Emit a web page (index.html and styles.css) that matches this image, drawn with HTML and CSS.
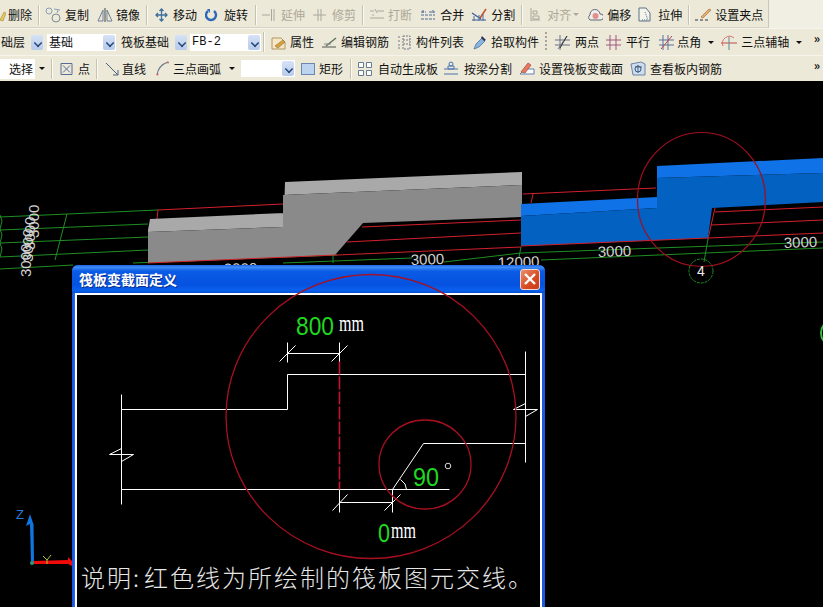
FILE: index.html
```html
<!DOCTYPE html>
<html lang="zh">
<head>
<meta charset="utf-8">
<title>筏板变截面定义</title>
<link rel="stylesheet" href="styles.css">
</head>
<body>
<div class="app">
  <div class="bar bar1">
   <div class="band">
    <div class="tool g2"><svg width="6" height="16" viewBox="0 0 6 16"><path d="M0 13 4 5l2 1-3 8z" fill="#e8c860" stroke="#a08830" stroke-width=".6"/></svg><span>删除</span></div>
    <i class="sep m6"></i>
    <div class="tool m6 g3"><svg width="17" height="16" viewBox="0 0 17 16" fill="none"><circle cx="4" cy="4" r="3" stroke="#8aa0b8"/><circle cx="11" cy="11" r="4" stroke="#7a8a98"/><path d="M9 2l6 1M13 3l-1 3" stroke="#8aa0b8"/></svg><span>复制</span></div>
    <div class="tool m8 g3"><svg width="16" height="16" viewBox="0 0 16 16" fill="none" stroke="#6c8096"><path d="M6 3 1 14h5zM10 3l5 11h-5z"/><path d="M8 1v14" stroke="#444"/></svg><span>镜像</span></div>
    <i class="sep m6"></i>
    <div class="tool m8 g5"><svg width="13" height="14" viewBox="0 0 13 14" fill="none" stroke="#3f6f9f" stroke-width="1.3"><path d="M6.500 1v12M1 7h11M4.500 3l2-2 2 2M4.500 11l2 2 2-2M3 5 1 7l2 2M10 5l2 2-2 2"/></svg><span>移动</span></div>
    <div class="tool m8 g6"><svg width="13" height="14" viewBox="0 0 13 14" fill="none"><path d="M3 3a5 5 0 1 0 6 0" stroke="#2f68b8" stroke-width="2.400"/><path d="M2 1h3v4z" fill="#2f68b8"/></svg><span>旋转</span></div>
    <i class="sep m7"></i>
    <div class="tool m6 g6 off"><svg width="13" height="14" viewBox="0 0 13 14" fill="none" stroke="#aaa69a"><path d="M0 7h8M9.500 1v12M12 1v12"/></svg><span>延伸</span></div>
    <div class="tool m8 g6 off"><svg width="13" height="14" viewBox="0 0 13 14" fill="none" stroke="#aaa69a"><path d="M0 7h13M5 1v12M8 1v12"/></svg><span>修剪</span></div>
    <i class="sep m6"></i>
    <div class="tool m6 g3 off"><svg width="16" height="14" viewBox="0 0 16 14" fill="none" stroke="#a8a89c"><path d="M1 3h4M8 3h7M1 10h14M6 1l2 4M3 7h2"/></svg><span>打断</span></div>
    <div class="tool m8 g4"><svg width="16" height="14" viewBox="0 0 16 14" fill="none" stroke="#4a6a98"><path d="M1 4h5M9 4h6M1 11h14M3 2v4M13 2v4M1 7h14" stroke-dasharray="3 1"/></svg><span>合并</span></div>
    <div class="tool m7 g4"><svg width="16" height="15" viewBox="0 0 16 15" fill="none"><path d="M1 13h14M1 6l9 6" stroke="#3a5a98" stroke-width="1.200"/><path d="M9 11 15 2" stroke="#c85030" stroke-width="1.500"/><path d="M3 9v5M8 8v6M12 7v7" stroke="#4a6aa8"/></svg><span>分割</span></div>
    <i class="sep m6"></i>
    <div class="tool m8 g6 off"><svg width="11" height="15" viewBox="0 0 11 15" fill="none" stroke="#aaa69a"><path d="M1 1v13M1 13h9M3 4h4v3H3zM3 9h6v3H3z"/></svg><span>对齐</span></div>
    <i class="drop m2 dim"></i>
    <div class="tool m9 g4"><svg width="15" height="14" viewBox="0 0 15 14"><path d="M2 12a3 3 0 0 1 0-5 5 5 0 0 1 10-1 3 3 0 0 1 1 6z" fill="#eee" stroke="#667"/><circle cx="7.500" cy="8" r="3" fill="#e09088"/></svg><span>偏移</span></div>
    <div class="tool m7 g6"><svg width="14" height="15" viewBox="0 0 14 15" fill="none" stroke="#5a7088"><path d="M1 1h7l4 5v8H1z" fill="#f4f4ea"/><path d="M7 5l3 8M4 13h6" stroke-dasharray="1 1"/></svg><span>拉伸</span></div>
    <i class="sep m6"></i>
    <div class="tool m6 g3"><svg width="17" height="15" viewBox="0 0 17 15" fill="none"><path d="M0 13h3M5 13h3M10 13h3" stroke="#333"/><path d="M6 10 14 2l2 1-8 8z" fill="#e8b070" stroke="#a07040" stroke-width=".7"/></svg><span>设置夹点</span></div>
   </div>
  </div>

  <div class="bar bar2">
    <span class="m1">础层</span>
    <i class="arrow m6"></i>
    <div class="combo m4 w69"><span>基础</span><i class="arrow"></i></div>
    <span class="m5">筏板基础</span>
    <i class="arrow m6"></i>
    <div class="combo m3 w71"><span class="mono">FB-2</span><i class="arrow"></i></div>
    <i class="sep m2"></i>
    <div class="tool m7 g3"><svg width="16" height="15" viewBox="0 0 16 15"><path d="M1 3h9l4 4v7H1z" fill="#f4e8c8" stroke="#b09860"/><path d="M4 11l8-6 2 2-7 6z" fill="#d8a040" stroke="#90702c" stroke-width=".6"/></svg><span>属性</span></div>
    <div class="tool m8 g3"><svg width="16" height="15" viewBox="0 0 16 15" fill="none"><path d="M0 12h14" stroke="#555"/><path d="M4 11 14 3" stroke="#607060" stroke-width="1.500"/><path d="M2 9h7" stroke="#888"/></svg><span>编辑钢筋</span></div>
    <div class="tool m8 g5"><svg width="14" height="15" viewBox="0 0 14 15" fill="none" stroke="#778"><path d="M6 1h7v13H6zM6 5h7M6 9h7M1 2h3M1 6h3M1 10h3M1 13h3" stroke-dasharray="2 1"/></svg><span>构件列表</span></div>
    <div class="tool m9 g4"><svg width="14" height="15" viewBox="0 0 14 15"><path d="M1 14l2-5 6-6 3 3-6 6z" fill="#8ab4e0" stroke="#406898" stroke-width=".7"/><path d="M9 1l4 4-2 1-3-3z" fill="#335"/></svg><span>拾取构件</span></div>
    <i class="grip m6"></i>
    <div class="tool m8 g5"><svg width="15" height="15" viewBox="0 0 15 15" fill="none" stroke="#6a7288"><path d="M0 5h15M0 10h15M5 0v15M3 14 12 1"/><path d="M12 1 5 13" stroke="#333"/></svg><span>两点</span></div>
    <div class="tool m7 g5"><svg width="15" height="15" viewBox="0 0 15 15" fill="none" stroke="#a05880"><path d="M0 5h15M0 10h15M4 0v15M10 0v15"/></svg><span>平行</span></div>
    <div class="tool m9 g2"><svg width="16" height="15" viewBox="0 0 16 15" fill="none" stroke="#5870a0"><path d="M0 5h15M0 10h15M4 0v15M9 0v15"/><path d="M2 14 13 1" stroke="#c04040"/></svg><span>点角</span></div>
    <i class="drop m7"></i>
    <div class="tool m7 g4"><svg width="16" height="15" viewBox="0 0 16 15" fill="none"><path d="M0 8h16" stroke="#c04848"/><path d="M8 2v13" stroke="#5a8a9a"/><path d="M2 11a7 7 0 0 1 11-8" stroke="#d87070"/></svg><span>三点辅轴</span></div>
    <i class="drop m7"></i>
    <span class="more">»</span>
  </div>

  <div class="bar bar3">
    <div class="field w35"><span>选择</span></div>
    <i class="drop m4"></i>
    <i class="sep m6"></i>
    <div class="tool m8 g5"><svg width="13" height="14" viewBox="0 0 13 14" fill="none" stroke="#5a6a98"><path d="M1 1.500h11v11H1zM3 3.500l7 7M10 3.500l-7 7"/></svg><span>点</span></div>
    <i class="sep m6"></i>
    <div class="tool m8 g3"><svg width="14" height="14" viewBox="0 0 14 14" fill="none" stroke="#4a6078"><path d="M1 1 13 13M8 13h5V8"/></svg><span>直线</span></div>
    <div class="tool m10 g4"><svg width="13" height="15" viewBox="0 0 13 15" fill="none"><path d="M1 14C2 7 6 3 12 1" stroke="#6a7a8a" stroke-width="1.200"/><circle cx="1.500" cy="13.500" r="1" fill="#d86060"/><circle cx="12" cy="1.500" r="1" fill="#d86060"/></svg><span>三点画弧</span></div>
    <i class="drop m8"></i>
    <div class="combo m6 w54"><span></span><i class="arrow"></i></div>
    <div class="tool m6 g4"><svg width="14" height="12" viewBox="0 0 14 12"><rect x=".5" y=".5" width="13" height="11" fill="#bcd4f0" stroke="#6a88b0"/></svg><span>矩形</span></div>
    <i class="sep m7"></i>
    <div class="tool m7 g6"><svg width="14" height="14" viewBox="0 0 14 14" fill="#fff" stroke="#667a90"><path d="M.500.500h5v5h-5zM8.500.500h5v5h-5zM.500 8.500h5v5h-5zM8.500 8.500h5v5h-5z"/></svg><span>自动生成板</span></div>
    <div class="tool m6 g6"><svg width="14" height="15" viewBox="0 0 14 15" fill="none" stroke="#4a72b0"><path d="M0 8h14M0 13h14M4 5h6v3H4z"/><circle cx="7" cy="3" r="2"/></svg><span>按梁分割</span></div>
    <div class="tool m7 g4"><svg width="16" height="15" viewBox="0 0 16 15"><path d="M1 13 6 8h9v5z" fill="#fff" stroke="#6080b0"/><path d="M2 11 9 2l3 2-6 8z" fill="#e87860" stroke="#a04838" stroke-width=".7"/></svg><span>设置筏板变截面</span></div>
    <div class="tool m7 g4"><svg width="16" height="16" viewBox="0 0 16 16" fill="none"><path d="M1 3 11 1l4 2v11H3z" fill="#cfdcec" stroke="#6a86a8"/><path d="M5 6h7M8 4v8" stroke="#48688c"/><circle cx="8" cy="8" r="3" stroke="#3a5a80"/></svg><span>查看板内钢筋</span></div>
    <span class="more">»</span>
  </div>

  <div class="canvas">
    <svg class="scene" viewBox="0 81 823 526" width="823" height="526">
      <g class="grid" fill="none">
        <path d="M0 217 158 210M0 230 148 224M0 243 148 237M0 257 148 250M0 269 73 265M133 263 337 255M283 263 412 258M444 262 521 253 823 242M541 260 823 248M67 214 55 260M521 247 519 257M708 239 704 262M333 253 333 263"/>
        <circle cx="701" cy="271" r="12" stroke-dasharray="3 1"/>
        <path d="M0 215l2 6-2 8 2 6-2 8 2 6-2 8"/>
      </g>
      <g class="redline" fill="none">
        <path d="M158 210 283 204M158 210 157 219M523 194 656 188M533 194 531 203M362 227 521 220M347 242 521 233M337 255 521 247M715 212 823 207M711 225 823 220M715 208 708 239"/>
      </g>
      <path class="g-top" d="M148 230 150 219 284 213 285 182 522 172V185L283 195 283 227 148 232Z"/>
      <path class="g-front" d="M148 232 283 227 283 195 522 185V217L363 223 335 255 148 263Z"/>
      <path class="redline" fill="none" d="M148 263 337 255"/>
      <path class="b-top" d="M521 204 657 197V208L521 216Z"/>
      <path class="b-top" d="M657 166 823 158V173L657 178Z"/>
      <path class="b-front" d="M521 216 657 208V178L823 173V202L712 208 708 238 521 246Z"/>
      <path class="redline" fill="none" d="M521 246 708 238 823 233"/>
      <ellipse class="ring" cx="701.500" cy="199.500" rx="64" ry="67"/>
      <g class="dim">
        <text x="224" y="274" transform="rotate(-1 224 274)">3000</text>
        <text x="411" y="265" transform="rotate(-2 411 265)">3000</text>
        <text x="498" y="268" transform="rotate(-2 498 268)">12000</text>
        <text x="598" y="257" transform="rotate(-2 598 257)">3000</text>
        <text x="784" y="248" transform="rotate(-2 784 248)">3000</text>
        <text x="697" y="276" class="num">4</text>
        <text x="31" y="277" transform="rotate(-90 31 277)">3000</text>
        <text x="33" y="262" transform="rotate(-90 33 262)">3000</text>
        <text x="35" y="250" transform="rotate(-90 35 250)">3000</text>
        <text x="39" y="238" transform="rotate(-90 39 238)">3000</text>
      </g>
      <circle class="hub" cx="834" cy="333" r="13"/>
      <g class="axes">
        <path class="ax-z" d="M31 563 30 524 26 526 30 514 34 526 33.500 524 34 563Z"/>
        <path class="ax-x" d="M33 561 68 560V557L72 561V566L68 564H33Z"/>
        <path class="ax-y" d="M43 556 47 560 51 555M47 560V564"/>
        <circle class="ax-o" cx="32" cy="563" r="2"/>
        <text x="16" y="519" class="ax-label">Z</text>
      </g>
    </svg>

    <section class="dialog">
      <header class="titlebar">
        <h1>筏板变截面定义</h1>
        <button class="close" type="button" aria-label="关闭"><svg width="14" height="14" viewBox="0 0 14 14"><path d="M2 2 12 12M12 2 2 12" stroke="#fff" stroke-width="2.400"/></svg></button>
      </header>
      <div class="client"></div>
      <svg class="drawing" viewBox="73 265 472 342" width="472" height="342">
        <g class="wire" fill="none" transform="translate(-.5 -.5)">
          <path d="M122 395V505M122 410H288V375H526M526 352V463M526 444H424L393 490M122 490H450"/>
          <path class="thin" d="M288 343V363M340 343V363M288 354H340M280 362 296 346M332 362 348 346"/>
          <path class="thin" d="M340 490V513M393 490V513M340 503H393M333 511 348 495M385 511 401 495"/>
          <path class="thin" d="M514 410H538M514 410 526 404M526 417 538 410M110 455H134M110 455 122 449M122 462 134 455"/>
          <path class="thin" d="M401 480Q407 484 407 490"/>
          <path class="cut" d="M340 362V490"/>
        </g>
        <ellipse class="ring2" cx="371" cy="416.500" rx="145" ry="142"/>
        <ellipse class="ring2" cx="425" cy="464.500" rx="46" ry="44.500"/>
        <text class="val" x="296" y="335" textLength="38" lengthAdjust="spacingAndGlyphs">800</text>
        <text class="unit" x="339" y="331" textLength="25" lengthAdjust="spacingAndGlyphs">mm</text>
        <text class="val" x="413" y="486" textLength="26" lengthAdjust="spacingAndGlyphs">90</text>
        <circle class="deg" cx="448" cy="466" r="2.800"/>
        <text class="val" x="378" y="542" textLength="12" lengthAdjust="spacingAndGlyphs">0</text>
        <text class="unit" x="391" y="538" textLength="25" lengthAdjust="spacingAndGlyphs">mm</text>
        <text class="note" x="81" y="587">说明:<tspan dx="3">红色线为所绘制的筏板图元交线。</tspan></text>
      </svg>
    </section>
  </div>
</div>
</body>
</html>
```

FILE: styles.css
```css
* { box-sizing: border-box; }
html, body { margin: 0; padding: 0; height: 100%; overflow: hidden; background: #000; }
.app {
  width: 823px; height: 607px; display: flex; flex-direction: column;
  font: 12px/14px "Noto Sans CJK SC", "Liberation Sans", sans-serif; color: #111;
}
.bar {
  display: flex; align-items: center; background: #ece9d8; flex: none; white-space: nowrap;
}
.bar1 { height: 28px; background: #f1efe4; align-items: stretch; }
.band {
  display: flex; align-items: center; width: 769px; padding-top: 2px;
  background: #ece9d8; border-right: 1px solid #cbc8b8; border-bottom: 1px solid #d6d3c3;
}
.bar2 { height: 27px; border-top: 1px solid #f6f5ec; }
.bar3 { height: 26px; border-top: 1px solid #f6f5ec; }
.tool { display: flex; align-items: center; flex: none; }
.tool svg { flex: none; display: block; }
.off { color: #aca899; }
.g2 { gap: 2px; } .g3 { gap: 3px; } .g4 { gap: 4px; } .g5 { gap: 5px; } .g6 { gap: 6px; }
.m1 { margin-left: 1px; } .m2 { margin-left: 2px; } .m3 { margin-left: 3px; } .m4 { margin-left: 4px; }
.m5 { margin-left: 5px; } .m6 { margin-left: 6px; } .m7 { margin-left: 7px; } .m8 { margin-left: 8px; }
.m9 { margin-left: 9px; } .m10 { margin-left: 10px; }
.sep { display: block; flex: none; width: 1px; height: 20px; background: #c5c2b2; box-shadow: 1px 0 0 #fbfaf4; }
.drop { display: block; flex: none; width: 0; height: 0; border: 3px solid transparent; border-top: 3px solid #111; border-bottom: 0; }
.drop.dim { border-top-color: #aca899; }
.arrow {
  display: block; flex: none; width: 12px; height: 15px; position: relative;
  background: linear-gradient(#d6e2f6, #b6caea); border-radius: 2px;
}
.arrow::after {
  content: ""; position: absolute; left: 3px; top: 4px; width: 6px; height: 6px;
  border: solid #24487c; border-width: 0 2px 2px 0; transform: scale(.75) rotate(45deg);
}
.combo { display: flex; align-items: center; justify-content: space-between; height: 17px; padding: 0 1px 0 2px; background: #fff; flex: none; }
.w69 { width: 69px; } .w71 { width: 71px; } .w54 { width: 54px; }
.mono { font-family: "Liberation Mono", monospace; }
.field { display: flex; align-items: center; height: 20px; padding-left: 9px; background: #fff; flex: none; }
.w35 { width: 35px; }
.grip { display: block; flex: none; width: 2px; height: 20px; background: repeating-linear-gradient(#a8a594 0 2px, transparent 2px 4px); }
.more { margin-left: auto; padding-right: 3px; font-weight: 700; color: #111; position: relative; top: -4px; }

.canvas { flex: 1; position: relative; background: #000; overflow: hidden; }
.scene { position: absolute; inset: 0; display: block; font-family: "Liberation Sans", sans-serif; }
.grid path, .grid circle { stroke: #1f8f24; stroke-width: 1; }
.redline { stroke: #d2202c; stroke-width: 1; }
.g-top { fill: #a9a9a9; }
.g-front { fill: #8a8a8a; }
.b-top { fill: #0f72e6; }
.b-front { fill: #0361c1; }
.ring { fill: none; stroke: #a00f1e; stroke-width: 1.200; }
.dim text { fill: #d2d2d2; font-size: 15px; }
.dim .num { font-size: 14px; fill: #eee; font-weight: 400; }
.hub { fill: none; stroke: #35c23c; stroke-width: 2; }
.ax-z { fill: #0f76e0; }
.ax-x { fill: #f00a0a; }
.ax-y { fill: none; stroke: #a8c83c; stroke-width: 1; }
.ax-o { fill: #2a9a80; }
.ax-label { fill: #2a78d8; font-size: 13px; }

.dialog {
  position: absolute; left: 72px; top: 184px; width: 473px; height: 350px;
  display: flex; flex-direction: column; border-radius: 6px 6px 0 0;
  background: linear-gradient(90deg, #1450d8 0, #2a6cf0 3px, #1c5ae0 100%);
  padding: 0 3px; overflow: hidden;
}
.titlebar {
  flex: none; height: 28px; margin: 0 -3px; padding: 0 5px 0 7px; display: flex; align-items: center; justify-content: space-between;
  background: linear-gradient(#1a62e8 0, #3f8cf6 8%, #0a5be6 22%, #0552e0 70%, #0b60ee 90%, #0350d0 100%);
}
.titlebar h1 { margin: 0; font: 700 14px/16px "Noto Sans CJK SC", sans-serif; color: #fff; text-shadow: 1px 1px 0 #0a2f90; }
.close {
  width: 20px; height: 21px; padding: 0; display: flex; align-items: center; justify-content: center;
  border: 1px solid #f0d8d0; border-radius: 3px; background: linear-gradient(135deg, #e89070, #d84a20 60%, #c83c18);
}
.close svg { display: block; }
.client { flex: 1; background: #000; border: 2px solid #fff; border-bottom: 0; }
.drawing { position: absolute; left: 1px; top: 0; display: block; }
.wire { stroke: #fff; stroke-width: 1; }
.cut { stroke: #c8142a; stroke-width: 1.600; stroke-dasharray: 13 2; fill: none; }
.ring2 { fill: none; stroke: #a80f20; stroke-width: 1.300; }
.val { fill: #1fd820; font: 25px "Liberation Sans", sans-serif; }
.unit { fill: #fff; font: 24px "Liberation Serif", serif; }
.deg { fill: none; stroke: #ddd; stroke-width: 1; }
.note { fill: #e6e6e6; font: 300 24px "Noto Sans CJK SC", sans-serif; letter-spacing: 2px; }
```
